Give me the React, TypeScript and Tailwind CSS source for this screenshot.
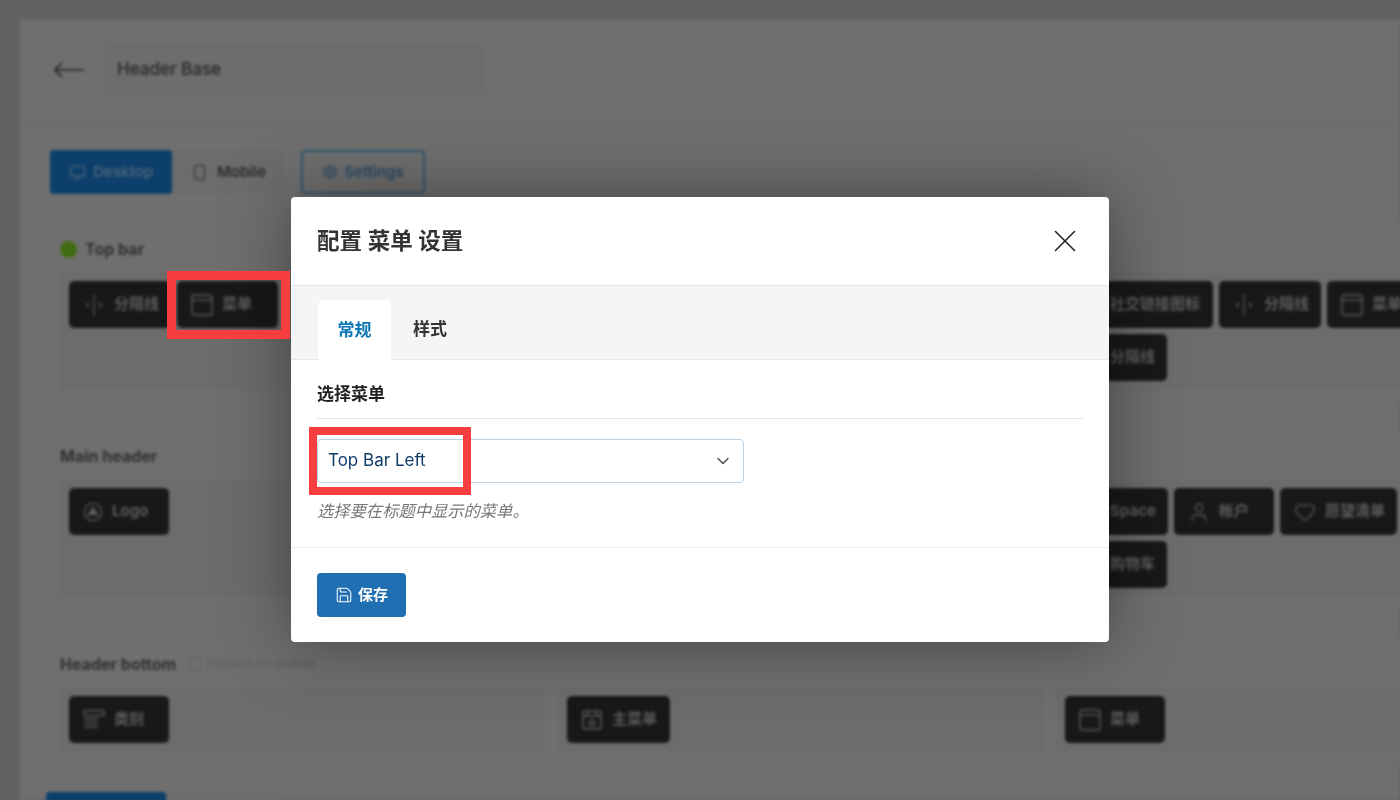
import type { ReactNode } from "react";
import { ChevronDown, Heart, Monitor, Save, Settings, ShoppingCart, Smartphone, Space, User, X } from "lucide-react";

const ICON = "w-[22px] h-[22px] shrink-0";

function DividerIcon() {
  return (
    <svg viewBox="0 0 22 22" className={ICON} fill="none" stroke="currentColor" strokeWidth="1.2">
      <path d="M11 0v22M6 9l-2.5 2L6 13M16 9l2.5 2-2.5 2" />
    </svg>
  );
}

function MenuIcon() {
  return (
    <svg viewBox="0 0 22 22" className={ICON} fill="none" stroke="currentColor" strokeWidth="1.4">
      <rect x="1" y="1" width="20" height="20" rx="2" />
      <path d="M1 6h20" />
    </svg>
  );
}

function LogoIcon() {
  return (
    <svg viewBox="0 0 20 20" className="w-5 h-5 shrink-0" fill="none" stroke="currentColor" strokeWidth="1.3">
      <circle cx="10" cy="10" r="8.6" />
      <path d="M10 5.5l4.5 7h-9z" fill="currentColor" />
    </svg>
  );
}

function CategoryIcon() {
  return (
    <svg viewBox="0 0 22 22" className={ICON} fill="none" stroke="currentColor" strokeWidth="1.6">
      <rect x="1" y="1.5" width="20" height="5" rx="1" />
      <path d="M1 10h14M1 14h14M1 18h14" />
    </svg>
  );
}

function MainMenuIcon() {
  return (
    <svg viewBox="0 0 22 22" className={ICON} fill="none" stroke="currentColor" strokeWidth="1.4">
      <rect x="2" y="2" width="18" height="18" rx="2" />
      <path d="M2 7h18M7 2v5M15 2v5" />
      <circle cx="11" cy="14" r="2.8" />
    </svg>
  );
}

function Item({ icon, label, width }: { icon?: ReactNode; label: string; width: string }) {
  return (
    <div className={`h-[47px] ${width} shrink-0 rounded-[5px] bg-[#17181a] text-[#5c5c5c] flex items-center gap-[9px] pl-[14px] text-[15px] font-bold`}>
      {icon}
      <span className="whitespace-nowrap">{label}</span>
    </div>
  );
}

function Column({ children }: { children?: ReactNode }) {
  return <div className="bg-[#6c6c6c] p-[9px] flex flex-col gap-[6px]">{children}</div>;
}

function Section({ title, children, extra, head = "h-[49px] pt-[3px]", className = "" }: { title: ReactNode; children: ReactNode; extra?: ReactNode; head?: string; className?: string }) {
  return (
    <section className={`ml-[27px] w-[1520px] border border-[#6c6c6c] bg-[#6f6f6f] px-[12px] pb-[11px] ${className}`}>
      <div className={`${head} flex items-center gap-[8px] text-[16px] font-bold text-[#303030]`}>
        {title}
        {extra}
      </div>
      <div className="grid grid-cols-[485px_485px_485px] gap-[13px]">{children}</div>
    </section>
  );
}

export default function App() {
  return (
    <div className="relative w-[1400px] h-[800px] overflow-hidden bg-[#626262] font-['Inter','Noto_Sans_CJK_SC',sans-serif]">
      {/* Page behind the dialog */}
      <div className="blur-[1.4px] pt-5 pl-5 h-[800px]">
        <div className="bg-[#6f6f6f] h-[780px]">
          <div className="h-[103px] border-b border-[#686868] flex items-center pl-[34px] gap-[19px]">
            <svg viewBox="0 0 30 16" className="w-[30px] h-[16px] text-[#202020] -mt-[2px]" fill="none" stroke="currentColor" strokeWidth="1.6">
              <path d="M30 8H1M8 1L1 8l7 7" />
            </svg>
            <div className="w-[381px] h-[50px] -mt-[2px] border border-[#6b6b6b] bg-[#6d6d6d] rounded flex items-center pl-[13px] text-[17px] font-medium text-[#282828]">
              Header Base
            </div>
          </div>

          <div className="ml-[30px] mt-[27px] flex items-center h-[44px]">
            <div className="w-[122px] h-[44px] rounded bg-[#0c3f6b] text-[#4a6379] flex items-center justify-center gap-[7px] text-[15px] font-semibold">
              <Monitor className="w-[17px] h-[17px]" /> Desktop
            </div>
            <div className="w-[113px] h-[44px] bg-[#6c6c6c] text-[#2c2c2c] flex items-center justify-center gap-[9px] text-[15px] font-semibold">
              <Smartphone className="w-[17px] h-[17px]" strokeWidth={1.5} /> Mobile
            </div>
            <div className="ml-[16px] w-[124px] h-[44px] rounded border-2 border-[#2f5672] text-[#264a66] flex items-center justify-center gap-[6px] text-[15px] font-semibold">
              <Settings className="w-[16px] h-[16px]" /> Settings
            </div>
          </div>

          <div className="mt-[28px] flex flex-col gap-[30px]">
            <Section
              title={
                <>
                  <span className="w-[17px] h-[17px] rounded-full bg-[#416c12]" />
                  <span>Top bar</span>
                </>
              }
            >
              <Column>
                <div className="flex gap-[6px]">
                  <Item icon={<DividerIcon />} label="分隔线" width="w-[102px]" />
                  <Item icon={<MenuIcon />} label="菜单" width="w-[101px]" />
                </div>
                <div className="h-[47px]" />
              </Column>
              <Column />
              <Column>
                <div className="flex gap-[6px]">
                  <Item icon={<MenuIcon />} label="社交链接图标" width="w-[148px]" />
                  <Item icon={<DividerIcon />} label="分隔线" width="w-[102px]" />
                  <Item icon={<MenuIcon />} label="菜单" width="w-[101px]" />
                </div>
                <Item icon={<DividerIcon />} label="分隔线" width="w-[102px]" />
              </Column>
            </Section>

            <Section title={<span>Main header</span>} head="h-[46px]">
              <Column>
                <Item icon={<LogoIcon />} label="Logo" width="w-[100px]" />
                <div className="h-[47px]" />
              </Column>
              <Column />
              <Column>
                <div className="flex gap-[6px]">
                  <Item icon={<Space className={ICON} />} label="Space" width="w-[103px]" />
                  <Item icon={<User className={ICON} strokeWidth={1.4} />} label="帐户" width="w-[100px]" />
                  <Item icon={<Heart className={ICON} strokeWidth={1.4} />} label="愿望清单" width="w-[117px]" />
                </div>
                <Item icon={<ShoppingCart className={ICON} />} label="购物车" width="w-[102px]" />
              </Column>
            </Section>

            <Section
              title={<span>Header bottom</span>}
              className="-mt-[2px]"
              extra={
                <span className="flex items-center gap-[5px] ml-[3px] text-[13px] font-normal text-[#5e5e5e]">
                  <Smartphone className="w-[16px] h-[16px]" strokeWidth={1.3} /> Hidden on mobile
                </span>
              }
            >
              <Column>
                <Item icon={<CategoryIcon />} label="类别" width="w-[100px]" />
              </Column>
              <Column>
                <Item icon={<MainMenuIcon />} label="主菜单" width="w-[103px]" />
              </Column>
              <Column>
                <Item icon={<MenuIcon />} label="菜单" width="w-[100px]" />
              </Column>
            </Section>
          </div>

          <div className="ml-[26px] mt-[28px] flex">
            <div className="w-[120px] h-[44px] rounded bg-[#0c3f6b]" />
            <div className="w-[113px] h-[44px] bg-[#6c6c6c]" />
          </div>
        </div>
      </div>

      {/* Dialog */}
      <div className="absolute left-[291px] top-[197px] w-[818px] h-[445px] bg-white rounded-[4px] shadow-[0_0_70px_rgba(0,0,0,0.4)] flex flex-col text-[#2c2c2c]">
        <div className="h-[88px] shrink-0 flex items-center justify-between pl-[26px] pr-[29px]">
          <h2 className="text-[22.5px] font-semibold text-[#333333]">配置 菜单 设置</h2>
          <X className="w-[38px] h-[38px] -m-[4px] text-[#222222]" strokeWidth={1} />
        </div>

        <div className="h-[75px] shrink-0 bg-[#f5f5f5] border-y border-[#e6e6e6] flex items-end pl-[27px]">
          <div className="w-[73px] h-[60px] pt-[1px] -mb-px bg-white rounded-t-[5px] flex items-center justify-center text-[17px] font-semibold text-[#0b76b4]">
            常规
          </div>
          <div className="ml-[22px] h-[60px] pt-[1px] flex items-center text-[17px] font-semibold text-[#333333]">样式</div>
        </div>

        <div className="h-[188px] shrink-0 border-b border-[#ececec] pt-[22px] px-[26px]">
          <div className="h-[37px] border-b border-[#e6e6e6] text-[17px] leading-[24px] font-semibold text-[#222222]">选择菜单</div>
          <div className="mt-[20px] w-[427px] h-[44px] rounded-[4px] border border-[#bcd0e0] flex items-center justify-between pl-[10px] pr-[10px] text-[17px] text-[#0f3c68]">
            <span>Top Bar Left</span>
            <ChevronDown className="w-[20px] h-[20px] text-[#444444]" strokeWidth={1.5} />
          </div>
          <p className="mt-[16px] text-[16.3px] leading-[24px] italic text-[#777777]">选择要在标题中显示的菜单。</p>
        </div>

        <div className="pt-[25px] pl-[26px]">
          <button className="w-[89px] h-[44px] rounded-[4px] bg-[#1f6fb2] text-white flex items-center justify-center gap-[5px] text-[15px] font-bold">
            <Save className="w-[18px] h-[18px]" strokeWidth={1.4} /> 保存
          </button>
        </div>
      </div>

      {/* Red highlight boxes */}
      <div className="absolute left-[167px] top-[271px] w-[123px] h-[68px] border-[9px] border-[#f63d40]" />
      <div className="absolute left-[309px] top-[427px] w-[162px] h-[68px] border-[8px] border-[#f63d40]" />
    </div>
  );
}
